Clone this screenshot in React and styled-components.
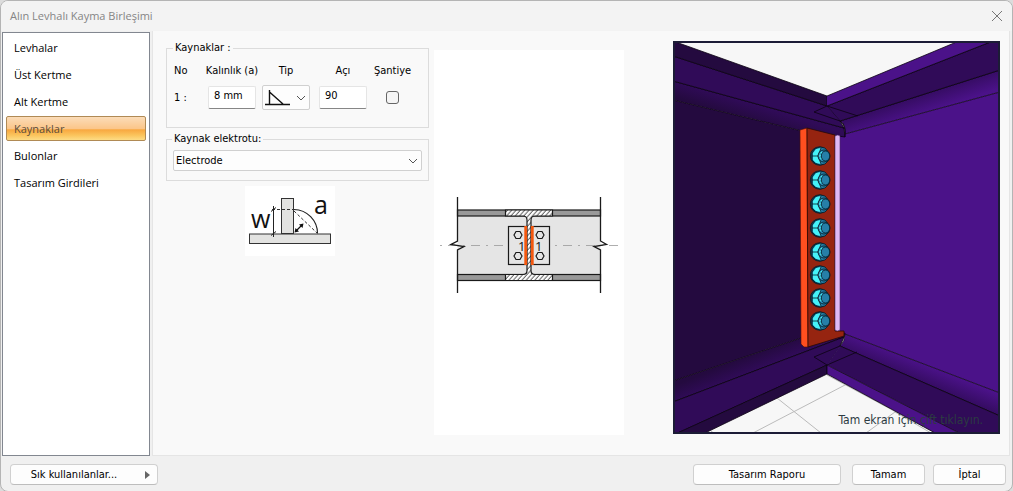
import React, { useState } from "react";
import styled, { createGlobalStyle } from "styled-components";

const pages = [
  "Levhalar",
  "Üst Kertme",
  "Alt Kertme",
  "Kaynaklar",
  "Bulonlar",
  "Tasarım Girdileri",
];

const boltRows = [115, 139, 163, 187, 211, 234, 257, 280];

const App = () => {
  const [page, setPage] = useState("Kaynaklar");

  return (
    <>
      <GlobalStyle />
      <Dialog>
        <TitleBar>
          <Title>Alın Levhalı Kayma Birleşimi</Title>
          <CloseButton type="button" aria-label="Kapat">
            <CloseIcon />
          </CloseButton>
        </TitleBar>
        <Body>
          <Nav>
            {pages.map((name) => (
              <NavItem
                key={name}
                type="button"
                $active={name === page}
                onClick={() => setPage(name)}
              >
                {name}
              </NavItem>
            ))}
          </Nav>
          <Content>
            <Form>
              <WeldGroup>
                <Legend>Kaynaklar :</Legend>
                <WeldGrid>
                  <HeadCell $start>No</HeadCell>
                  <HeadCell as="label" htmlFor="thickness">
                    Kalınlık (a)
                  </HeadCell>
                  <HeadCell as="label" htmlFor="type">
                    Tip
                  </HeadCell>
                  <HeadCell as="label" htmlFor="angle">
                    Açı
                  </HeadCell>
                  <HeadCell as="label" htmlFor="site">
                    Şantiye
                  </HeadCell>
                  <HeadCell $start>1 :</HeadCell>
                  <TextBox id="thickness" defaultValue="8 mm" />
                  <SelectWrap>
                    <Select id="type" $height={25}>
                      <option value="fillet" aria-label="Köşe" />
                    </Select>
                    <WeldTypeIcon />
                    <Chevron />
                  </SelectWrap>
                  <TextBox id="angle" defaultValue="90" />
                  <CheckBox id="site" type="checkbox" />
                </WeldGrid>
              </WeldGroup>
              <ElectrodeGroup>
                <Legend id="electrode-label">Kaynak elektrotu:</Legend>
                <SelectWrap>
                  <Select $height={21} aria-labelledby="electrode-label">
                    <option>Electrode</option>
                  </Select>
                  <Chevron />
                </SelectWrap>
              </ElectrodeGroup>
              <WeldPicture />
            </Form>
            <SectionPanel>
              <SectionDrawing />
            </SectionPanel>
            <Viewer>
              <Model />
              <Hint>Tam ekran için çift tıklayın.</Hint>
            </Viewer>
          </Content>
        </Body>
        <Footer>
          <MenuButton type="button" $wide>
            Sık kullanılanlar...
            <MenuArrow viewBox="0 0 5 8">
              <path d="M0 0L5 4L0 8Z" fill="#666" />
            </MenuArrow>
          </MenuButton>
          <Actions>
            <Button type="button" $wide>
              Tasarım Raporu
            </Button>
            <Confirm>
              <Button type="button">Tamam</Button>
              <Button type="button">İptal</Button>
            </Confirm>
          </Actions>
        </Footer>
      </Dialog>
    </>
  );
};

export default App;

const CloseIcon = () => (
  <svg width="12" height="12" viewBox="0 0 12 12">
    <path d="M1 1L11 11M11 1L1 11" stroke="#777" strokeWidth="1" />
  </svg>
);

const Chevron = () => (
  <ChevronSvg viewBox="0 0 10 6">
    <path d="M1 1L5 5L9 1" fill="none" stroke="#555" />
  </ChevronSvg>
);

const WeldTypeIcon = () => (
  <TypeSvg viewBox="0 0 26 18">
    <path d="M0 15.5H25M4.5 1V16M4.5 3L18 15" fill="none" stroke="#111" strokeWidth="1.4" />
  </TypeSvg>
);

const WeldPicture = () => (
  <WeldSvg viewBox="0 0 90 70">
    <g fill="#e3e3e1" stroke="#333" strokeWidth="1">
      <rect x="36.5" y="12.5" width="12" height="35" />
      <rect x="4.5" y="48" width="81" height="9.5" />
    </g>
    <path d="M49 23.5A24 24 0 0 1 72.5 47.5" fill="none" stroke="#222" strokeWidth="1.2" />
    <path d="M27 23.5H48M49 25L72 47" fill="none" stroke="#333" strokeDasharray="3 2" />
    <path d="M28.5 20V51M26 25.5L31 21.5M26 49.5L31 45.5" stroke="#222" />
    <path d="M50.5 45.5L57.5 38.5" stroke="#111" strokeWidth="1.2" />
    <path d="M49.5 46.5L50.5 42L54 45.5ZM58.5 37.5L54 38.5L57.5 42Z" fill="#111" />
    <PictureText x="6" y="42">w</PictureText>
    <PictureText x="69" y="28">a</PictureText>
  </WeldSvg>
);

const SectionDrawing = () => (
  <SectionSvg viewBox="0 0 190 115">
    <defs>
      <pattern id="hatch" width="3.2" height="4" patternUnits="userSpaceOnUse" patternTransform="rotate(42)">
        <rect width="3.2" height="4" fill="#fff" />
        <path d="M1 0V4" stroke="#222" strokeWidth="0.8" />
      </pattern>
    </defs>
    <rect x="23.5" y="25" width="143" height="71" fill="#e5e5e5" />
    <g fill="#999" stroke="#1a1a1a" strokeWidth="1.2">
      <rect x="23.5" y="25" width="143" height="6" />
      <rect x="23.5" y="89.5" width="143" height="6" />
    </g>
    <path
      d="M71.5 25H118.5V31H101Q97 31 97 35V85.5Q97 89.5 101 89.5H118.5V95.5H71.5V89.5H89Q93 89.5 93 85.5V35Q93 31 89 31H71.5Z"
      fill="url(#hatch)"
      stroke="#1a1a1a"
      strokeWidth="1.2"
    />
    <path d="M6 60.5H184" stroke="#999" strokeWidth="0.8" strokeDasharray="2 6 9 6" />
    <g fill="#e5e5e5" stroke="#1a1a1a" strokeWidth="1.2">
      <rect x="74.5" y="41.5" width="18" height="38" />
      <rect x="97.5" y="41.5" width="18" height="38" />
      <path d="M82 46.500H86L88 50L86 53.500H82L80 50Z" />
      <path d="M82 67.500H86L88 71L86 74.500H82L80 71Z" />
      <path d="M104 46.500H108L110 50L108 53.500H104L102 50Z" />
      <path d="M104 67.500H108L110 71L108 74.500H104L102 71Z" />
    </g>
    <path d="M91.7 41V80M98.3 41V80" stroke="#f4580f" strokeWidth="2.8" />
    <SectionText x="84" y="66">1</SectionText>
    <SectionText x="101" y="66">1</SectionText>
    <path
      d="M23.5 12V56L17 59.5L30 61.5L23.5 65V108M166.5 12V56L172.500 59.5L160 61.5L166.5 65V108"
      fill="none"
      stroke="#1a1a1a"
      strokeWidth="1.3"
    />
  </SectionSvg>
);

const Bolt = ({ y }) => (
  <g transform={`translate(147 ${y})`} stroke="#061c26" strokeWidth="0.8">
    <ellipse cx="-0.5" cy="0" rx="9.2" ry="9.2" fill="#134a60" />
    <path d="M-8 -3L-5 -7L0 -9L5 -8L9 -3V4L5 8L0 9L-5 7L-8 4Z" fill="#247ba3" />
    <path d="M-7 -3L-4 -7L1 -8L-2 0L1 8L-4 7L-7 4Z" fill="#45f2f8" stroke="none" />
    <path d="M-8 0H-2M-2 0L1 -8M-2 0L1 8" fill="none" />
    <circle cx="4" cy="0" r="6" fill="#2b89b3" />
    <path d="M2 -4L0 0L2 4" fill="none" stroke="#45e8ef" strokeWidth="2" strokeDasharray="2 1" />
    <ellipse cx="5.5" cy="0" rx="4.2" ry="5" fill="#267fa8" />
  </g>
);

const Model = () => (
  <ModelSvg viewBox="0 0 327 393" preserveAspectRatio="xMidYMid slice">
    <defs>
      <linearGradient id="leftTop" gradientUnits="userSpaceOnUse" x1="60" y1="57" x2="55" y2="73">
        <stop offset="0" stopColor="#300b58" />
        <stop offset="1" stopColor="#240a3f" />
      </linearGradient>
      <linearGradient id="rightTop" gradientUnits="userSpaceOnUse" x1="250" y1="53" x2="256" y2="71">
        <stop offset="0" stopColor="#350c62" />
        <stop offset="1" stopColor="#4b1289" />
      </linearGradient>
      <linearGradient id="leftBottom" gradientUnits="userSpaceOnUse" x1="60" y1="321" x2="66" y2="336">
        <stop offset="0" stopColor="#240a3f" />
        <stop offset="1" stopColor="#300b58" />
      </linearGradient>
      <linearGradient id="rightBottom" gradientUnits="userSpaceOnUse" x1="252" y1="323" x2="245" y2="340">
        <stop offset="0" stopColor="#4b1289" />
        <stop offset="1" stopColor="#350c62" />
      </linearGradient>
    </defs>
    <rect width="327" height="393" fill="#f7f7f7" />
    {/* floor grid */}
    <path
      d="M104 357L148 392M80 392L172 344M154 334L262 392M193 392L222 371M222 371L258 392M38 390L42 393"
      fill="none"
      stroke="#bbb"
    />
    {/* webs */}
    <path d="M0 59L129 90L168 95V298L128 297L0 340Z" fill="#240a3f" />
    <path d="M166 94L172 93L327 51V352L172 293L166 300Z" fill="#4b1289" />
    {/* top flanges */}
    <g stroke="#0b0312" strokeWidth="0.8">
      <path d="M0 40L171 87L172 96L129 90L0 59Z" fill="url(#leftTop)" />
      <path d="M0 15L154 65L167 80L171 87L0 40Z" fill="#300b58" />
      <path d="M0 0L154 55V65L0 15Z" fill="#240a3f" />
      <path d="M167 80L327 29V51L172 93Q173 83 167 80Z" fill="url(#rightTop)" />
      <path d="M154 65L320 0H327V29L167 80Z" fill="#300b58" />
      <path d="M154 55L286 0H320L154 65Z" fill="#4b1289" stroke="none" />
      <path d="M154 55L286 0M154 65L320 0" fill="none" />
    </g>
    <path d="M141 71L154 65L167 80Z" fill="#300b58" />
    <path
      d="M154 65L141 71L167 80Q173 84 172 96M154 65L185 75"
      fill="none"
      stroke="#0b0312"
      strokeWidth="0.8"
    />
    {/* bottom flanges */}
    <g stroke="#0b0312" strokeWidth="0.8">
      <path d="M0 340L128 297L172 292L171 296L0 361Z" fill="url(#leftBottom)" />
      <path d="M0 361L171 296L167 305L154 324L7 391L0 394Z" fill="#300b58" />
      <path d="M0 394L154 324V333L30 393H0Z" fill="#240a3f" />
      <path d="M172 293L327 352V375L167 305Q172 300 172 293Z" fill="url(#rightBottom)" />
      <path d="M154 324L167 305L327 375V393H288Z" fill="#300b58" stroke="none" />
      <path d="M154 324L288 393H264L154 333Z" fill="#4b1289" />
      <path d="M167 305L327 375" fill="none" />
    </g>
    <path d="M141 316L154 324L167 305Z" fill="#300b58" />
    <path d="M154 324L141 316L167 305M154 324L184 311" fill="none" stroke="#0b0312" strokeWidth="0.8" />
    {/* end plate */}
    <path d="M127 89L134 87L135 306L131 306L128 303Z" fill="#ff4f1f" stroke="#4a1206" strokeWidth="0.6" />
    <path d="M134 87L162 94V290H171V295L135 306Z" fill="#962410" stroke="#2a0a04" strokeWidth="0.8" />
    <path d="M162 95Q165 93 167 95V289Q164 291 162 289Z" fill="#dfb8f5" stroke="#4d2c66" strokeWidth="0.6" />
    {boltRows.map((y) => (
      <Bolt key={y} y={y} />
    ))}
  </ModelSvg>
);

const GlobalStyle = createGlobalStyle`
  * {
    box-sizing: border-box;
  }

  body {
    margin: 0;
    background: #dcdcdc;
    font-family: "DejaVu Sans Condensed", "Noto Sans", sans-serif;
    font-size: 11px;
    line-height: 14px;
    color: #000;
  }

  button, input, select {
    font: inherit;
    color: inherit;
  }
`;

const Dialog = styled.div`
  display: flex;
  flex-direction: column;
  min-height: 100vh;
  border: 1px solid #b4b4b4;
  border-radius: 8px;
  background: #f0f0f0;
  overflow: hidden;
`;

const TitleBar = styled.header`
  display: flex;
  align-items: center;
  justify-content: space-between;
  height: 30px;
  padding: 0 9px;
  background: #f3f3f3;
`;

const Title = styled.h1`
  margin: 0;
  font-family: "Open Sans", sans-serif;
  font-size: 11px;
  font-weight: 400;
  line-height: 16px;
  color: #858585;
`;

const CloseButton = styled.button`
  display: flex;
  padding: 0;
  border: 0;
  background: none;
`;

const Body = styled.main`
  display: flex;
  flex: 1;
  gap: 2px;
  padding: 0 2px 0 1px;
`;

const Nav = styled.nav`
  display: flex;
  flex-direction: column;
  flex: 0 0 148px;
  gap: 2px;
  margin-top: 1px;
  padding: 2px 3px;
  border: 1px solid #828790;
  background: #fff;
`;

const NavItem = styled.button`
  height: 25px;
  padding: 0 7px;
  border: 1px solid ${({ $active }) => ($active ? "#b08a55" : "transparent")};
  border-radius: 2px;
  background: ${({ $active }) =>
    $active
      ? "linear-gradient(#fbdcb8 0%, #fbc68a 50%, #f8a840 56%, #fbc55e 80%, #fddc85 100%)"
      : "none"};
  font-family: "Open Sans", sans-serif;
  text-align: left;
  color: ${({ $active }) => ($active ? "#5a4d3c" : "#000")};
`;

const Content = styled.section`
  display: flex;
  align-items: flex-start;
  flex: 1;
  padding: 10px 9px 20px 13px;
  border: 1px solid #e5e5e5;
  border-top: 0;
  background: #f9f9f9;
`;

const Form = styled.form`
  display: flex;
  flex-direction: column;
  flex: 0 0 263px;
`;

const Group = styled.fieldset`
  min-width: 0;
  margin: 0;
  border: 1px solid #dcdcdc;
`;

const WeldGroup = styled(Group)`
  height: 87px;
  padding: 9px 7px 0;
`;

const ElectrodeGroup = styled(Group)`
  margin-top: 4px;
  padding: 4px 6px 9px;
`;

const Legend = styled.legend`
  padding: 0 2px;
  margin-left: -1px;
`;

const WeldGrid = styled.div`
  display: grid;
  grid-template-columns: 28px 60px 48px 66px 33px;
  row-gap: 7px;
  align-items: center;
  justify-items: center;
`;

const HeadCell = styled.span`
  justify-self: ${({ $start }) => ($start ? "start" : "center")};
  white-space: nowrap;
`;

const TextBox = styled.input`
  width: 48px;
  height: 23px;
  padding: 0 5px 4px;
  border: 1px solid #e5e5e5;
  border-bottom-color: #868686;
  border-radius: 2px;
  background: #fff;
`;

const SelectWrap = styled.div`
  position: relative;
  width: 100%;
`;

const Select = styled.select`
  display: block;
  width: 100%;
  height: ${({ $height }) => $height}px;
  padding: 0 2px;
  border: 1px solid #d0d0d0;
  border-radius: 2px;
  background: #fdfdfd;
  appearance: none;
`;

const ChevronSvg = styled.svg`
  position: absolute;
  top: calc(50% - 3px);
  right: 4px;
  width: 10px;
  height: 6px;
  pointer-events: none;
`;

const TypeSvg = styled.svg`
  position: absolute;
  top: 4px;
  left: 3px;
  width: 26px;
  height: 18px;
  pointer-events: none;
`;

const CheckBox = styled.input`
  width: 13px;
  height: 13px;
  margin: 0;
  border: 1px solid #666;
  border-radius: 3px;
  background: #f5f5f5;
  appearance: none;

  &:checked {
    background: #2f6fb3;
  }
`;

const WeldSvg = styled.svg`
  align-self: flex-start;
  width: 90px;
  height: 70px;
  margin: 5px 0 0 79px;
  background: #fff;
`;

const PictureText = styled.text`
  font-family: "Open Sans", sans-serif;
  font-size: 25px;
  fill: #111;
`;

const SectionPanel = styled.div`
  display: flex;
  align-items: center;
  flex: 0 0 190px;
  height: 385px;
  margin: 9px 0 0 5px;
  background: #fff;
`;

const SectionSvg = styled.svg`
  width: 190px;
  height: 115px;
`;

const SectionText = styled.text`
  font-family: "Open Sans", sans-serif;
  font-size: 13px;
  fill: #111;
`;

const Viewer = styled.div`
  position: relative;
  flex: 1;
  height: 393px;
  margin-left: 49px;

  &::after {
    content: "";
    position: absolute;
    inset: 0;
    border: 2px solid #1c1c36;
    pointer-events: none;
  }
`;

const ModelSvg = styled.svg`
  display: block;
  width: 100%;
  height: 100%;
`;

const Hint = styled.span`
  position: absolute;
  right: 17px;
  bottom: 6px;
  font-size: 12px;
  line-height: 16px;
  white-space: nowrap;
  color: #2c3b42;
`;

const Footer = styled.footer`
  display: flex;
  justify-content: space-between;
  padding: 8px 6px 6px 9px;
`;

const Actions = styled.div`
  display: flex;
  gap: 11px;
`;

const Confirm = styled.div`
  display: flex;
  gap: 8px;
`;

const Button = styled.button`
  position: relative;
  width: ${({ $wide }) => ($wide ? 148 : 73)}px;
  height: 21px;
  padding: 0;
  border: 1px solid #d0d0d0;
  border-bottom-color: #bdbdbd;
  border-radius: 4px;
  background: #fdfdfd;
`;

const MenuButton = styled(Button)`
  padding-right: 20px;
`;

const MenuArrow = styled.svg`
  position: absolute;
  top: 6px;
  right: 7px;
  width: 5px;
  height: 8px;
`;
